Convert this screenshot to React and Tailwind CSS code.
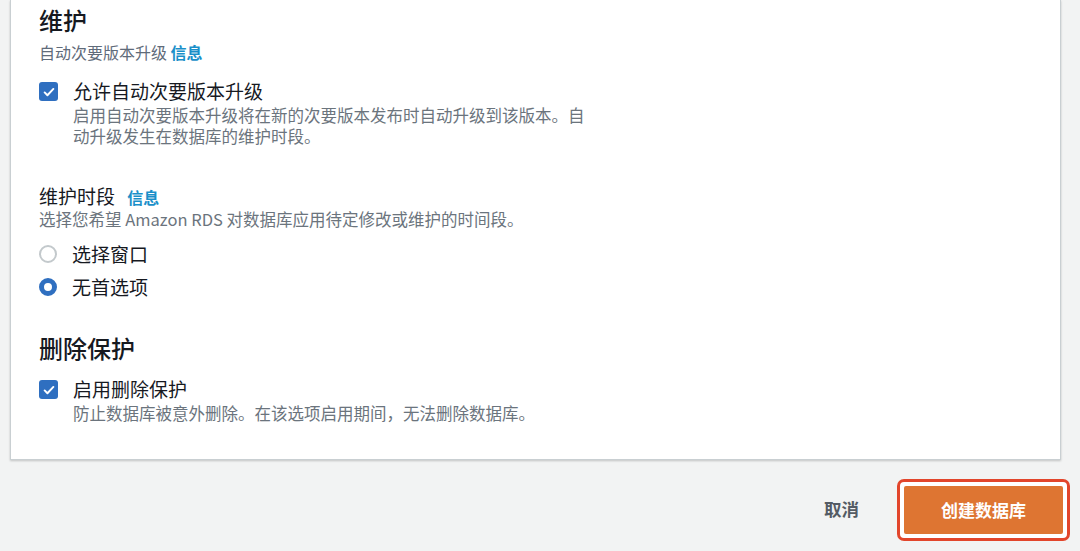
import React from "react";

const font = {
  fontFamily: '"Noto Sans CJK SC", "Noto Sans", "Liberation Sans", sans-serif',
};

const Checkbox = () => (
  <span className="flex h-[19px] w-[19px] shrink-0 items-center justify-center rounded-[3px] bg-[#2f6fc0]">
    <svg viewBox="0 0 16 16" className="h-[14px] w-[14px]">
      <path d="M3 8.5l3.2 3.2L13 4.5" fill="none" stroke="#fff" strokeWidth="2.2" strokeLinecap="round" strokeLinejoin="round" />
    </svg>
  </span>
);

const Radio = ({ checked }) =>
  checked ? (
    <span className="h-[18px] w-[18px] shrink-0 rounded-full border-[5px] border-[#2f6fc0] bg-white" />
  ) : (
    <span className="h-[18px] w-[18px] shrink-0 rounded-full border-2 border-[#c3c9cc] bg-white" />
  );

export default function App() {
  return (
    <div style={font} className="flex h-[551px] w-[1080px] flex-col bg-[#f2f3f3]">
      <div className="ml-[10px] mr-[19px] h-[460px] border-x border-b border-[#c9cfd2] bg-white pl-[28px] shadow-[0_1px_2px_rgba(0,0,0,0.2)]">
        <h2 className="pt-[5px] text-[24px] leading-[30px] font-medium text-[#16191f]">维护</h2>
        <div className="mt-[6px] text-[16px] leading-[22px] text-[#5f6b7a]">
          自动次要版本升级 <span className="font-bold text-[#1a8fc9]">信息</span>
        </div>

        <div className="mt-[16px] flex items-start gap-[15px]">
          <div className="pt-[3px]">
            <Checkbox />
          </div>
          <div>
            <div className="text-[19px] leading-[24px] text-[#16191f]">允许自动次要版本升级</div>
            <div className="mt-[2px] w-[520px] text-[16.5px] leading-[21px] text-[#6b747d]">
              启用自动次要版本升级将在新的次要版本发布时自动升级到该版本。自动升级发生在数据库的维护时段。
            </div>
          </div>
        </div>

        <div className="mt-[37px] text-[19px] leading-[24px] text-[#16191f]">
          维护时段 <span className="ml-[8px] text-[16px] font-bold text-[#1a8fc9]">信息</span>
        </div>
        <div className="text-[16.5px] leading-[21px] text-[#6b747d]">
          选择您希望 Amazon RDS 对数据库应用待定修改或维护的时间段。
        </div>

        <div className="mt-[7px] flex h-[34px] items-center gap-[15px]">
          <Radio />
          <span className="text-[19px] text-[#16191f]">选择窗口</span>
        </div>
        <div className="flex h-[32px] items-center gap-[15px]">
          <Radio checked />
          <span className="text-[19px] text-[#16191f]">无首选项</span>
        </div>

        <h2 className="mt-[30px] text-[24px] leading-[30px] font-medium text-[#16191f]">删除保护</h2>
        <div className="mt-[14px] flex items-start gap-[15px]">
          <div className="pt-[3px]">
            <Checkbox />
          </div>
          <div>
            <div className="text-[19px] leading-[24px] text-[#16191f]">启用删除保护</div>
            <div className="mt-[2px] text-[16.5px] leading-[21px] text-[#6b747d]">
              防止数据库被意外删除。在该选项启用期间，无法删除数据库。
            </div>
          </div>
        </div>
      </div>

      <div className="flex flex-1 items-center justify-end pr-[10px] pt-[8px]">
        <span className="mr-[38px] text-[17.5px] font-bold text-[#545b64]">取消</span>
        <div className="rounded-[7px] border-[3px] border-[#e2452b] bg-white p-[4px]">
          <div className="flex h-[48px] w-[159px] items-center justify-center rounded-[2px] bg-[#de7532] text-[17px] font-bold text-white">
            创建数据库
          </div>
        </div>
      </div>
    </div>
  );
}
